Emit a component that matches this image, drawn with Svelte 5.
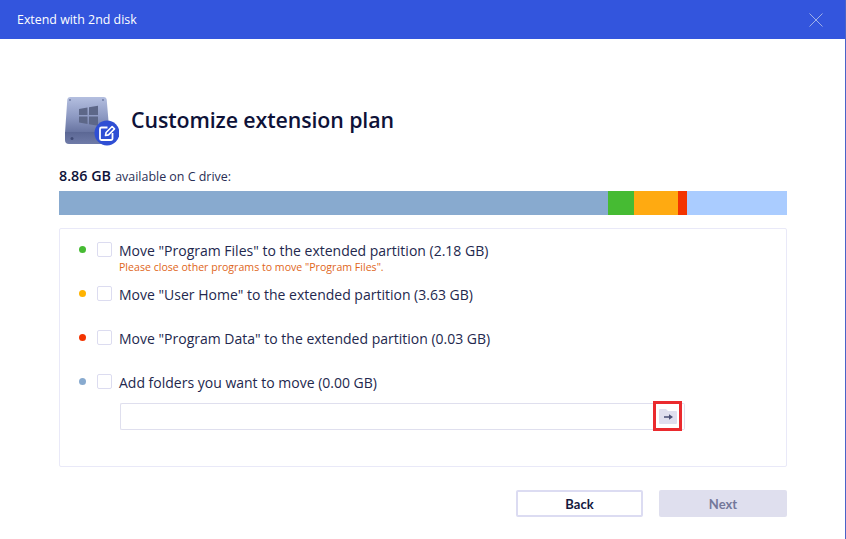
<script>
  const segments = [
    { color: '#88aacf', width: 549 },
    { color: '#46bb33', width: 26 },
    { color: '#ffaa11', width: 44 },
    { color: '#f33400', width: 9 },
    { color: '#aaccff', width: 100 }
  ];
  const rows = [
    { color: '#46bb33', label: 'Move "Program Files" to the extended partition (2.18 GB)', note: 'Please close other programs to move "Program Files".' },
    { color: '#ffb300', label: 'Move "User Home" to the extended partition (3.63 GB)' },
    { color: '#f33400', label: 'Move "Program Data" to the extended partition (0.03 GB)' },
    { color: '#88aacf', label: 'Add folders you want to move (0.00 GB)' }
  ];
</script>

<div class="window">
  <header class="titlebar">
    <span class="title">Extend with 2nd disk</span>
    <svg class="close" width="16" height="16" viewBox="0 0 16 16" aria-hidden="true">
      <path d="M1.500 1.500 14.500 14.500M14.500 1.500 1.500 14.500" stroke="#9fb0e8" stroke-width="1" fill="none" />
    </svg>
  </header>

  <main class="content">
    <div class="heading">
      <svg class="disk" width="58" height="52" viewBox="0 0 58 52" aria-hidden="true">
        <defs>
          <linearGradient id="diskBody" x1="0" y1="0" x2="0" y2="1">
            <stop offset="0" stop-color="#b4bfe0" />
            <stop offset="0.55" stop-color="#8d99c2" />
            <stop offset="1" stop-color="#66729f" />
          </linearGradient>
          <linearGradient id="diskBase" x1="0" y1="0" x2="0" y2="1">
            <stop offset="0" stop-color="#5b6794" />
            <stop offset="1" stop-color="#6f7ba8" />
          </linearGradient>
        </defs>
        <path d="M9 2h34q2.500 0 2.700 2.500L48.500 38H4L6.300 4.500Q6.500 2 9 2z" fill="url(#diskBody)" />
        <path d="M4 37h45v8q0 4-4 4H8q-4 0-4-4z" fill="url(#diskBase)" />
        <circle cx="9" cy="5" r="0.900" fill="#6b76a0" />
        <circle cx="42" cy="5" r="0.900" fill="#6b76a0" />
        <circle cx="11" cy="43.500" r="1.500" fill="#3f4a75" />
        <path d="M18 14l8.500-1.500v7.500H18zM28 12.300l9-1.500v9.200h-9zM18 21.500h8.500v7.500L18 27.500zM28 21.500h9v9.200l-9-1.500z" fill="#5d6788" />
        <circle cx="46" cy="38" r="12.500" fill="#2f4fd4" />
        <path d="M46.500 32.500h-6a1.500 1.500 0 0 0-1.500 1.500v9.500a1.500 1.500 0 0 0 1.500 1.500H50a1.500 1.500 0 0 0 1.500-1.500V38" fill="none" stroke="#fff" stroke-width="1.800" />
        <path d="M44.500 40.500l.6-3 6-6 2.400 2.400-6 6z" fill="none" stroke="#fff" stroke-width="1.600" stroke-linejoin="round" />
      </svg>
      <h1>Customize extension plan</h1>
    </div>

    <p class="available"><strong>8.86 GB</strong> <span class="rest">available on C drive:</span></p>

    <div class="bar">
      {#each segments as s}
        <span style="background:{s.color};flex:{s.width} 0 0"></span>
      {/each}
    </div>

    <section class="panel">
      {#each rows as r}
        <div class="row">
          <span class="dot" style="background:{r.color}"></span>
          <span class="check"></span>
          <div class="text">
            <div class="label">{r.label}</div>
            {#if r.note}<div class="note">{r.note}</div>{/if}
          </div>
        </div>
      {/each}
      <div class="pathrow">
        <div class="input"></div>
        <div class="browse">
          <svg width="18" height="15" viewBox="0 0 18 15" aria-hidden="true">
            <path d="M1 0h6l2 2h8a1 1 0 0 1 1 1v11a1 1 0 0 1-1 1H1a1 1 0 0 1-1-1V1a1 1 0 0 1 1-1z" fill="#dfdfee" />
            <path d="M5 7.300h5V5.300l4 2.700-4 2.700V8.700H5z" fill="#4a4f75" />
          </svg>
        </div>
        <div class="input-end"></div>
      </div>
    </section>

    <footer class="actions">
      <button class="back">Back</button>
      <button class="next" disabled>Next</button>
    </footer>
  </main>
</div>

<style>
  :global(body) {
    margin: 0;
    background: #fff;
  }
  .window {
    width: 846px;
    height: 539px;
    box-sizing: border-box;
    border-right: 1px solid #4a63c8;
    font-family: "Open Sans", "Noto Sans", sans-serif;
    color: #1a1f4b;
    overflow: hidden;
  }
  .titlebar {
    height: 39px;
    margin-right: -1px;
    background: #3355dd;
    display: flex;
    align-items: center;
    justify-content: space-between;
    padding: 0 22px 0 17px;
  }
  .title {
    color: #fff;
    font-size: 12.400px;
    font-weight: 500;
  }
  .close {
    display: block;
  }
  .content {
    padding: 57px 58px 0 59px;
  }
  .heading {
    display: flex;
    align-items: center;
    height: 50px;
    padding-left: 2px;
    gap: 12px;
  }
  .heading h1 {
    margin: 0 0 4px;
    font-size: 21.350px;
    font-weight: 600;
    color: #0e1238;
    letter-spacing: -0.1px;
  }
  .available {
    margin: 21px 0 0;
    height: 24px;
    font-size: 12.300px;
    line-height: 18px;
    color: #2a2f55;
  }
  .available strong {
    font-size: 14.300px;
    font-weight: 600;
    color: #0e1238;
  }
  .rest {
    margin-left: 1px;
    font-size: 12.450px;
  }
  .bar {
    display: flex;
    height: 24px;
  }
  .panel {
    box-sizing: border-box;
    height: 239px;
    margin-top: 13px;
    border: 1px solid #e9e9f8;
    border-radius: 2px;
    padding: 11px 0 0 19px;
  }
  .row {
    display: flex;
    align-items: flex-start;
    height: 44px;
  }
  .dot {
    width: 7px;
    height: 7px;
    border-radius: 50%;
    margin: 6px 11px 0 0;
    flex: none;
  }
  .check {
    box-sizing: border-box;
    width: 15px;
    height: 15px;
    border: 1.500px solid #dcdcf0;
    border-radius: 2px;
    margin: 2px 7px 0 0;
    flex: none;
  }
  .text {
    padding-top: 1px;
  }
  .label {
    font-size: 14px;
    line-height: 20px;
    color: #23284e;
    white-space: nowrap;
  }
  .note {
    font-size: 10.600px;
    line-height: 13px;
    color: #e0661a;
    white-space: nowrap;
  }
  .pathrow {
    display: flex;
    align-items: center;
    margin: -15px 0 0 41px;
    width: 565px;
    height: 30px;
  }
  .input {
    flex: 1;
    height: 27px;
    box-sizing: border-box;
    border: 1px solid #dfdfee;
    border-right: 0;
    border-radius: 2px 0 0 2px;
  }
  .input-end {
    width: 3px;
    height: 27px;
    box-sizing: border-box;
    border: 1px solid #dfdfee;
    border-left: 0;
    border-radius: 0 2px 2px 0;
    flex: none;
  }
  .browse {
    box-sizing: border-box;
    width: 29px;
    height: 30px;
    border: 3px solid #ea2a2e;
    display: flex;
    align-items: center;
    justify-content: center;
    flex: none;
  }
  .browse svg {
    display: block;
  }
  .actions {
    display: flex;
    justify-content: flex-end;
    gap: 16px;
    margin-top: 23px;
  }
  button {
    box-sizing: border-box;
    height: 27px;
    border-radius: 2px;
    font-family: Lato, sans-serif;
    font-size: 13px;
    font-weight: 700;
    padding: 0;
  }
  .back {
    width: 127px;
    background: #fff;
    border: 2px solid #dcdcf2;
    color: #14183e;
  }
  .next {
    width: 128px;
    background: #dfdfee;
    border: 0;
    color: #74789a;
  }
</style>
